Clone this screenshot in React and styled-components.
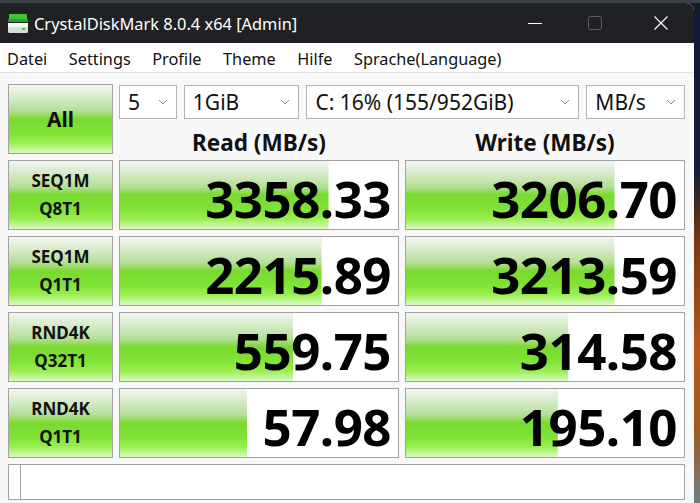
import React from "react"
import styled, { createGlobalStyle } from "styled-components"

const GlobalStyle = createGlobalStyle`
  html, body {
    margin: 0;
    padding: 0;
    width: 700px;
    height: 503px;
    overflow: hidden;
    font-family: "Noto Sans", "Open Sans", sans-serif;
  }
`

const green = `linear-gradient(to bottom,
  #f1f5ef 0%,
  #d6ebc9 18%,
  #b4df96 38%,
  #79d92f 50%,
  #80e236 70%,
  #99ef50 85%,
  #dcf9c6 100%)`

const Desktop = styled.div`
  width: 700px;
  height: 503px;
  display: flex;
  align-items: flex-start;
  background: linear-gradient(to bottom, #3a3f48 0px, #3a3f48 3px, #101a30 3px, #121c34 34%, #7a3812 48%, #b8581a 70%, #a05a20 85%, #6f7e86 100%);
`

const Window = styled.div`
  width: 694px;
  height: 500px;
  margin-top: 3px;
  display: flex;
  flex-direction: column;
  background: #f8f8f8;
  border-top-right-radius: 8px;
  overflow: hidden;
`

const TitleBar = styled.div`
  flex-shrink: 0;
  height: 40px;
  background: #202124;
  display: flex;
  align-items: center;
  padding-left: 7px;
  color: #ffffff;
  font-size: 16.4px;
`

const TitleText = styled.span`
  margin-left: 5px;
  flex: 1;
`

const WinButton = styled.div`
  width: ${(p) => p.w}px;
  height: 40px;
  display: flex;
  align-items: center;
  justify-content: center;
`

const MenuBar = styled.div`
  flex-shrink: 0;
  height: 30px;
  background: #ffffff;
  border-bottom: 1px solid #e2e2e2;
  display: flex;
  align-items: center;
  padding: 2px 0 0 7px;
  box-sizing: border-box;
  font-size: 16.3px;
  color: #111;
`

const MenuItem = styled.span`
  margin-right: 21.5px;
`

const Main = styled.div`
  flex-shrink: 0;
  padding: 11px 0 0 8px;
  display: grid;
  grid-template-columns: 105px 280px 280px;
  grid-template-rows: repeat(5, 70px) 36px;
  column-gap: 6px;
  row-gap: 6px;
`

const GreenButton = styled.div`
  border: 1px solid #a3a3a3;
  background: ${green};
  display: flex;
  flex-direction: column;
  align-items: center;
  justify-content: center;
  font-weight: 700;
  color: #111;
  font-size: ${(p) => (p.big ? "21px" : "17px")};
  line-height: ${(p) => (p.big ? "24px" : "28px")};
  box-sizing: border-box;
`

const TopArea = styled.div`
  grid-column: 2 / 4;
  display: grid;
  grid-template-columns: 280px 280px;
  grid-template-rows: 34px 36px;
  column-gap: 6px;
`

const SelectRow = styled.div`
  grid-column: 1 / 3;
  display: flex;
  gap: 7px;
  padding-top: 1px;
`

const Select = styled.div`
  width: ${(p) => p.w}px;
  height: 34px;
  box-sizing: border-box;
  border: 1px solid #b4b4b4;
  background: #ffffff;
  display: flex;
  align-items: center;
  padding: 0 8px 0 8px;
  font-size: 21px;
  color: #111;
`

const SelectLabel = styled.span`
  flex: 1;
`

const Header = styled.div`
  display: flex;
  align-items: center;
  justify-content: center;
  font-weight: 700;
  font-size: 22.5px;
  color: #111;
  padding-top: 12px;
`

const ValueBox = styled.div`
  border: 1px solid #a3a3a3;
  background-color: #ffffff;
  background-image: ${green};
  background-repeat: no-repeat;
  display: flex;
  align-items: center;
  justify-content: flex-end;
  padding: 6px 7px 0 0;
  box-sizing: border-box;
  font-weight: 700;
  font-size: 51px;
  letter-spacing: -0.5px;
  color: #000;
`

const StatusBar = styled.div`
  grid-column: 1 / 4;
  height: 36px;
  border: 1px solid #a3a3a3;
  background: #ffffff;
  box-sizing: border-box;
  display: flex;
  padding-left: 11px;
`

const Caret = styled.div`
  width: 1px;
  border-left: 1px solid #a0a0a0;
`

const Chevron = () => (
  <svg width="10" height="6" viewBox="0 0 10 6">
    <polyline points="1,1 5,5 9,1" fill="none" stroke="#8a8a8a" strokeWidth="1" />
  </svg>
)

const AppIcon = () => (
  <svg width="22" height="21" viewBox="0 0 22 21">
    <rect x="2" y="1" width="18" height="7" rx="1" fill="#3fc43a" />
    <rect x="1" y="6" width="20" height="3" fill="#22a428" />
    <rect x="1" y="10" width="20" height="10" rx="1.5" fill="#d8dcd8" />
    <rect x="1" y="10" width="20" height="4" fill="#f4f6f4" />
    <rect x="15" y="15" width="3" height="2" fill="#3ccb38" />
  </svg>
)

const rows = [
  { a: "SEQ1M", b: "Q8T1", read: "3358.33", rw: 75, write: "3206.70", ww: 75 },
  { a: "SEQ1M", b: "Q1T1", read: "2215.89", rw: 72.5, write: "3213.59", ww: 75 },
  { a: "RND4K", b: "Q32T1", read: "559.75", rw: 62.3, write: "314.58", ww: 58.3 },
  { a: "RND4K", b: "Q1T1", read: "57.98", rw: 45.8, write: "195.10", ww: 54.6 },
]

const menu = ["Datei", "Settings", "Profile", "Theme", "Hilfe", "Sprache(Language)"]

export default function App() {
  return (
    <>
      <GlobalStyle />
      <Desktop>
        <Window>
          <TitleBar>
            <AppIcon />
            <TitleText>CrystalDiskMark 8.0.4 x64 [Admin]</TitleText>
            <WinButton w={52}>
              <svg width="14" height="14" viewBox="0 0 14 14">
                <line x1="0" y1="7.5" x2="14" y2="7.5" stroke="#fff" strokeWidth="1" />
              </svg>
            </WinButton>
            <WinButton w={67}>
              <svg width="14" height="14" viewBox="0 0 14 14">
                <rect x="0.5" y="0.5" width="13" height="13" rx="2" fill="none" stroke="#5d5f63" strokeWidth="1" />
              </svg>
            </WinButton>
            <WinButton w={66}>
              <svg width="14" height="14" viewBox="0 0 14 14">
                <path d="M0.5 0.5 L13.5 13.5 M13.5 0.5 L0.5 13.5" stroke="#fff" strokeWidth="1.1" />
              </svg>
            </WinButton>
          </TitleBar>
          <MenuBar>
            {menu.map((m) => (
              <MenuItem key={m}>{m}</MenuItem>
            ))}
          </MenuBar>
          <Main>
            <GreenButton big>All</GreenButton>
            <TopArea>
              <SelectRow>
                <Select w={58}>
                  <SelectLabel>5</SelectLabel>
                  <Chevron />
                </Select>
                <Select w={116}>
                  <SelectLabel>1GiB</SelectLabel>
                  <Chevron />
                </Select>
                <Select w={274}>
                  <SelectLabel>C: 16% (155/952GiB)</SelectLabel>
                  <Chevron />
                </Select>
                <Select w={99}>
                  <SelectLabel>MB/s</SelectLabel>
                  <Chevron />
                </Select>
              </SelectRow>
              <Header>Read (MB/s)</Header>
              <Header>Write (MB/s)</Header>
            </TopArea>
            {rows.map((r, i) => (
              <React.Fragment key={i}>
                <GreenButton>
                  <span>{r.a}</span>
                  <span>{r.b}</span>
                </GreenButton>
                <ValueBox style={{ backgroundSize: `${r.rw}% 100%` }}>{r.read}</ValueBox>
                <ValueBox style={{ backgroundSize: `${r.ww}% 100%` }}>{r.write}</ValueBox>
              </React.Fragment>
            ))}
            <StatusBar>
              <Caret />
            </StatusBar>
          </Main>
        </Window>
      </Desktop>
    </>
  )
}
